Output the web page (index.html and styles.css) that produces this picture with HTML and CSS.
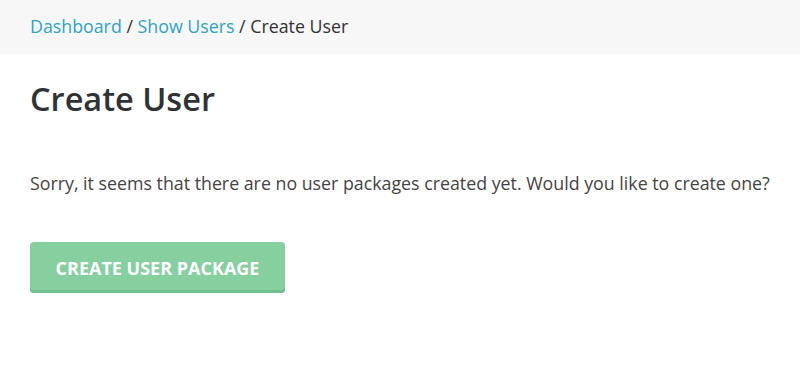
FILE: index.html
```html
<!DOCTYPE html>
<html lang="en">

<head>
    <meta charset="UTF-8">
    <title>Create User</title>
    <link rel="stylesheet" href="styles.css">
</head>

<body>

    <nav class="breadcrumb">
        <a href="#">Dashboard</a> / <a href="#">Show Users</a> / <span>Create User</span>
    </nav>

    <main class="content">
        <h1>Create User</h1>
        <p>Sorry, it seems that there are no user packages created yet. Would you like to create one?</p>
        <button class="create">Create user package</button>
    </main>

</body>

</html>
```

FILE: styles.css
```css
body {
    margin: 0;
    font-family: 'Open Sans', sans-serif;
    color: #333;
    background: #fff;
}

.breadcrumb {
    background: #f7f7f7;
    height: 54px;
    line-height: 52px;
    padding: 0 30px;
    font-size: 17.8px;
    color: #333;
}

.breadcrumb a {
    color: #2ea3c7;
    text-decoration: none;
}

.content {
    padding: 0 30px;
}

h1 {
    font-size: 32.5px;
    font-weight: 600;
    color: #2f3336;
    margin: 22px 0 0;
}

p {
    font-size: 17.8px;
    color: #444;
    margin: 50px 0 0;
    white-space: nowrap;
}

.create {
    margin-top: 47px;
    width: 255px;
    height: 51px;
    border: none;
    border-radius: 4px;
    background: #86cf9f;
    box-shadow: inset 0 -3px 0 #72c08d;
    color: #fff;
    font-family: 'Open Sans', sans-serif;
    font-weight: 700;
    font-size: 18px;
    text-transform: uppercase;
}
```
